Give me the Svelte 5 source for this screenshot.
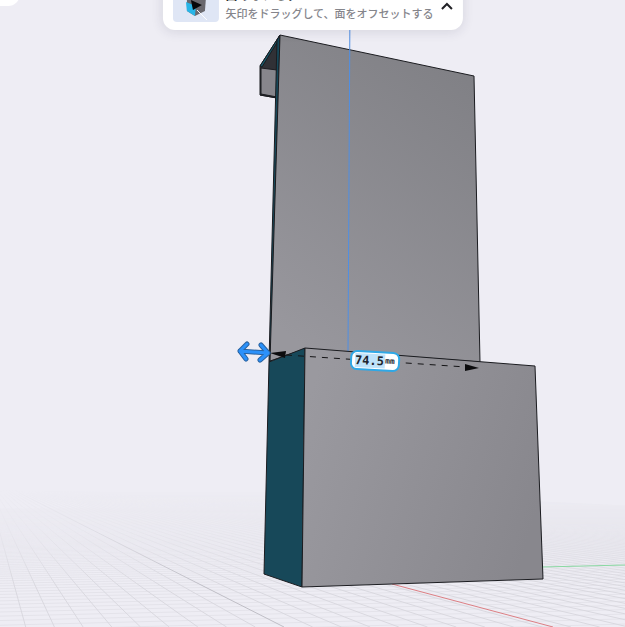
<script lang="ts">
  let offset = $state('74.5');
  let open = $state(true);

  // the ground grid runs towards two vanishing points on the horizon
  const horizon = 475;
  const leftX = -16;
  const rightX = 6000;

  const depthLines = Array.from({ length: 110 }, (_, i) => ({
    x: -3 + i * 28.7,
    major: i === 10
  }));

  const crossLines = Array.from({ length: 110 }, (_, i) => {
    const n = i + 28;
    return horizon + 4670 / n;
  });

  const arrow = 'M247 344 240 351 246 359M240 351 268 353M261 345 268 353 260 360';
</script>

<main class="workspace">
  <svg class="scene" viewBox="0 0 625 627" preserveAspectRatio="xMidYMid slice">
    <defs>
      <linearGradient id="fog" x1="0" y1="490" x2="0" y2="627" gradientUnits="userSpaceOnUse">
        <stop offset="0" stop-color="#fff" stop-opacity="0" />
        <stop offset="0.3" stop-color="#fff" stop-opacity="0.3" />
        <stop offset="0.7" stop-color="#fff" stop-opacity="1" />
      </linearGradient>
      <mask id="fade" maskUnits="userSpaceOnUse" x="0" y="480" width="625" height="150">
        <rect x="0" y="480" width="625" height="150" fill="url(#fog)" />
      </mask>
      <linearGradient id="back" x1="0.75" y1="0" x2="0.25" y2="1">
        <stop offset="0" stop-color="#808085" />
        <stop offset="1" stop-color="#98979d" />
      </linearGradient>
      <linearGradient id="front" x1="0" y1="0.3" x2="1" y2="0.6">
        <stop offset="0" stop-color="#9a999f" />
        <stop offset="1" stop-color="#88878d" />
      </linearGradient>
    </defs>

    <g mask="url(#fade)">
      {#each crossLines as y}
        <line class="grid cross" x1={leftX} y1={y} x2={rightX} y2={horizon} />
      {/each}
      {#each depthLines as line}
        <line class="grid" class:major={line.major} x1={leftX} y1={horizon} x2={line.x} y2="627" />
      {/each}
    </g>

    <line x1="392" y1="584" x2="553" y2="627" stroke="#dc7f84" />
    <line x1="542" y1="567" x2="625" y2="565" stroke="#8ad8a2" />

    <!-- hook at the top of the back panel -->
    <g stroke="#1b1c20" stroke-width="1" stroke-linejoin="round">
      <path d="M260 66 280 35 277 98 260 95Z" fill="#303136" />
      <path d="M261 68 277 70V97L261 94Z" fill="#87868c" />
      <path d="M260 95 277 98" />
      <path d="M260 66 280 35 278 41 262 67Z" fill="#17596b" />
      <path d="M280 35 277 40 269 362 271 362Z" fill="#17495a" />
      <path d="M280 35 474 76 480 362 305 349 270 361Z" fill="url(#back)" />
    </g>

    <line x1="350" y1="0" x2="348" y2="352" stroke="#4f8fe4" />

    <g stroke="#1b1c20" stroke-width="1" stroke-linejoin="round">
      <path d="M269 362 305 348 302 587 264 574Z" fill="#174859" />
      <path d="M305 348 535 366 543 579 302 587Z" fill="url(#front)" />
    </g>

    <!-- dimension line -->
    <path d="M286 355 466 367" stroke="#141416" stroke-dasharray="6 6" />
    <path d="M270 353 286 351 285 358Z" fill="#0c0c0e" />
    <path d="M479 368 465 364 465 371Z" fill="#0c0c0e" />

    <path class="handle outline" d={arrow} />
    <path class="handle" d={arrow} />

    <foreignObject x="345" y="345" width="60" height="34" transform="rotate(3 375 362)">
      <label class="dimension">
        <input bind:value={offset} aria-label="オフセット" />
        <span>mm</span>
      </label>
    </foreignObject>
  </svg>

  <div class="corner"></div>

  <section class="hint">
    <svg class="thumb" viewBox="0 0 46 46">
      <rect width="46" height="46" rx="4" fill="#dfe6f5" />
      <path d="M14 22 24 18 33 22 32 35 22 40 14 35Z" fill="#69686e" />
      <path d="M13 26 23 30 22 40 14 35Z" fill="#28b5e8" />
      <path d="M18 24 29 29 20 34Z" fill="#08080a" />
      <path d="M24 34 34 44" stroke="#fff" />
    </svg>
    <div class="text">
      <h1>面のオフセット</h1>
      {#if open}
        <p>矢印をドラッグして、面をオフセットする</p>
      {/if}
    </div>
    <button type="button" aria-label="閉じる" onclick={() => (open = !open)}>
      <svg viewBox="0 0 12 8"><path d="M1 7 6 2 11 7" /></svg>
    </button>
  </section>
</main>

<style>
  :global(body) {
    margin: 0;
    background: #eeedf4;
    font-family: "Noto Sans CJK JP", sans-serif;
  }

  .workspace {
    position: relative;
    height: 100vh;
    overflow: hidden;
  }

  .scene {
    display: block;
    width: 100%;
    height: 100%;
  }

  .grid {
    stroke: #d9d8df;
    stroke-width: 1;
  }

  .grid.cross {
    stroke: #e4e3ea;
  }

  .grid.major {
    stroke: #bfbec6;
  }

  .handle {
    fill: none;
    stroke: #2b91fa;
    stroke-width: 3;
    stroke-linecap: round;
    stroke-linejoin: round;
  }

  .handle.outline {
    stroke: #2a63a0;
    stroke-width: 5;
  }

  .dimension {
    display: flex;
    align-items: center;
    box-sizing: border-box;
    width: 50px;
    height: 20px;
    margin: 6px 5px;
    padding: 0 3px;
    border: 2px solid #2fa8e6;
    border-radius: 7px;
    background: #fff;
    color: #20262e;
    font-family: "DejaVu Sans Mono", monospace;
  }

  .dimension input {
    box-sizing: border-box;
    width: 30px;
    height: 14px;
    padding: 0;
    border: 0;
    outline: 0;
    background: #bfe3fa;
    color: inherit;
    font: bold 12px "DejaVu Sans Mono", monospace;
  }

  .dimension span {
    font-size: 8px;
    font-weight: bold;
    line-height: 16px;
  }

  .corner {
    position: absolute;
    top: -26px;
    left: -40px;
    width: 60px;
    height: 32px;
    border-radius: 12px;
    background: #fff;
  }

  .hint {
    position: absolute;
    top: -34px;
    left: 50%;
    display: flex;
    align-items: flex-end;
    gap: 7px;
    box-sizing: border-box;
    height: 64px;
    padding: 0 10px 8px;
    border-radius: 12px;
    background: #fff;
    box-shadow: 0 2px 12px rgba(40, 40, 70, 0.12);
    transform: translateX(-50%);
    white-space: nowrap;
  }

  .thumb {
    width: 46px;
    height: 46px;
  }

  h1,
  p {
    margin: 0;
    line-height: 18px;
  }

  h1 {
    color: #222226;
    font-size: 12px;
    font-weight: 700;
  }

  p {
    color: #85858b;
    font-size: 11px;
    font-weight: 500;
  }

  .hint button {
    display: flex;
    align-items: center;
    height: 32px;
    padding: 0;
    border: 0;
    background: none;
    cursor: pointer;
  }

  .hint button svg {
    width: 12px;
    height: 8px;
    fill: none;
    stroke: #222226;
    stroke-width: 2;
  }
</style>
